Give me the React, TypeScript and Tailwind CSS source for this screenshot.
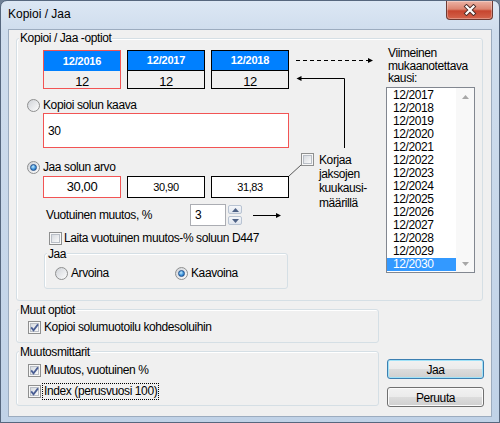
import React from 'react';

const Check = ({ checked = false }: { checked?: boolean }) => (
  <span className="relative inline-block size-[13px] shrink-0 border border-[#8e8f8f] bg-[#f7f7f7]">
    <span className="absolute inset-[1px] border border-[#b9bec6] bg-gradient-to-br from-[#d7dbe0] to-[#fafafa]" />
    {checked && (
      <svg className="absolute -left-px -top-px" width="13" height="13" viewBox="0 0 13 13">
        <path d="M3.2 6.4 L5.5 9.2 L10 3.4" fill="none" stroke="#4a5e94" strokeWidth="1.8" />
      </svg>
    )}
  </span>
);

const Radio = ({ checked = false }: { checked?: boolean }) => (
  <span className="inline-flex size-[13px] shrink-0 items-center justify-center rounded-full border border-[#8e8f8f] bg-gradient-to-br from-[#d0d3d8] to-[#fdfdfd]">
    {checked && (
      <span className="size-[7px] rounded-full border border-[#23518c] bg-[radial-gradient(circle_at_40%_35%,#c4ecff_0%,#3c92da_55%,#1b5ca6_100%)]" />
    )}
  </span>
);

const Group = ({
  label,
  className = '',
  labelClass = '-top-[7px]',
  children,
}: {
  label: string;
  className?: string;
  labelClass?: string;
  children?: React.ReactNode;
}) => (
  <div className={`relative rounded-[3px] border border-[#d5dfe5] shadow-[inset_1px_1px_0_#ffffff] ${className}`}>
    <span className={`absolute left-[2px] ${labelClass} bg-[#f0f0f0] px-px leading-[14px]`}>{label}</span>
    {children}
  </div>
);

const DateBox = ({ year, red = false }: { year: number; red?: boolean }) => (
  <div className={`flex h-[39px] w-[78px] flex-col border ${red ? 'border-[#f25454]' : 'border-black'}`}>
    <div
      className={`flex h-[21px] items-center justify-center bg-[#0080ff] text-[11px] font-bold tracking-[-0.2px] text-white ${
        red ? '' : 'border-b border-black'
      }`}
    >
      12/{year}
    </div>
    <div className="flex flex-1 items-center justify-center pt-[4px] text-[13px] leading-[13px]">12</div>
  </div>
);

const ValueBox = ({ value, red = false }: { value: string; red?: boolean }) => (
  <div
    className={`flex h-[22px] w-[78px] items-center justify-center border bg-white ${
      red ? 'border-[#f25454] text-[13px]' : 'border-black text-[11px]'
    }`}
  >
    {value}
  </div>
);

const Btn = ({ children, primary = false }: { children: React.ReactNode; primary?: boolean }) => (
  <div
    className={`flex h-[20px] w-[97px] items-center justify-center rounded-[3px] border bg-[linear-gradient(180deg,#f2f2f2_0%,#ebebeb_50%,#dddddd_50%,#cfcfcf_100%)] pt-px ${
      primary
        ? 'border-[#3c7fb1] shadow-[inset_0_0_0_1px_#9fe2f8]'
        : 'border-[#707070] shadow-[inset_0_0_0_1px_#fbfbfb]'
    }`}
  >
    {children}
  </div>
);

const years = Array.from({ length: 14 }, (_, i) => 2017 + i);

export default function App() {
  return (
    <div className="h-[423px] w-[500px] overflow-hidden bg-[#6f8096] font-['Liberation_Sans',Arial,sans-serif] text-[12px] tracking-[-0.4px] text-black">
      <div className="flex h-full flex-col rounded-t-[7px] border border-[#56677e] bg-[linear-gradient(180deg,#dce7f4_0px,#cfdded_30px,#c0d2e7_100%)]">
        {/* title bar */}
        <div className="flex h-[28px] shrink-0">
          <span className="ml-[7px] mt-[6px] leading-[15px] tracking-normal">Kopioi / Jaa</span>
          <div className="ml-auto mr-[6px] flex h-[19px] w-[47px] items-center justify-center rounded-b-[4px] border border-t-0 border-[#6e3a33] bg-[linear-gradient(180deg,#ecb3a5_0%,#dc8571_45%,#c7452f_55%,#d4644c_100%)] shadow-[inset_0_0_0_1px_rgba(255,255,255,0.3)]">
            <svg width="14" height="12" viewBox="0 0 14 12">
              <path d="M3.5 2.5 L10.5 9.5 M10.5 2.5 L3.5 9.5" stroke="#4b2c28" strokeWidth="4" strokeLinecap="square" />
              <path d="M3.5 2.5 L10.5 9.5 M10.5 2.5 L3.5 9.5" stroke="#ffffff" strokeWidth="2.2" strokeLinecap="square" />
            </svg>
          </div>
        </div>

        {/* client area */}
        <div className="mx-[7px] mb-[5px] flex-1 border border-[#9cacbf] bg-[#f0f0f0] pl-[7px] pt-[8px]">
          <Group label="Kopioi / Jaa -optiot" labelClass="-top-[8px]" className="h-[263px] w-[467px]">
            <svg className="pointer-events-none absolute left-0 top-0 overflow-visible" width="465" height="261">
              <line x1="279" y1="21.5" x2="352" y2="21.5" stroke="#000" strokeDasharray="4 3" />
              <polygon points="356,21.5 351,19 351,24" fill="#000" />
              <path d="M327.5 109 V39.5 H283" fill="none" stroke="#000" />
              <polygon points="279.5,39.5 284.5,37 284.5,42" fill="#000" />
              <line x1="284" y1="126" x2="272" y2="137" stroke="#5a5a5a" />
              <line x1="236" y1="176.5" x2="260" y2="176.5" stroke="#000" />
              <polygon points="264,176.5 259,174 259,179" fill="#000" />
            </svg>

            <div className="flex">
              {/* left column */}
              <div className="flex w-[272px] flex-col">
                <div className="ml-[26px] mt-[11px] flex gap-[6px]">
                  <DateBox year={2016} red />
                  <DateBox year={2017} />
                  <DateBox year={2018} />
                </div>

                <div className="ml-[10px] mt-[8px] flex h-[16px] items-center gap-[3px]">
                  <Radio />
                  <span>Kopioi solun kaava</span>
                </div>

                <div className="ml-[26px] flex h-[35px] w-[246px] items-center border border-[#f25454] bg-white pl-[4px]">
                  30
                </div>

                <div className="ml-[10px] mt-[11px] flex h-[16px] items-center gap-[3px]">
                  <Radio checked />
                  <span>Jaa solun arvo</span>
                </div>

                <div className="ml-[26px] mt-px flex gap-[6px]">
                  <ValueBox value="30,00" red />
                  <ValueBox value="30,90" />
                  <ValueBox value="31,83" />
                </div>

                <div className="ml-[29px] mt-[6px] flex h-[22px] items-center">
                  <span className="w-[144px]">Vuotuinen muutos, %</span>
                  <div className="flex h-[22px] w-[36px] items-center border border-[#abadb3] bg-white pl-[4px]">3</div>
                  <div className="ml-[2px] flex h-[22px] w-[14px] flex-col justify-between py-px">
                    <div className="flex h-[9px] items-center justify-center rounded-[2px] border border-[#b8c3d2] bg-gradient-to-b from-[#f5f7fa] to-[#dfe5ee]">
                      <svg width="7" height="4" viewBox="0 0 7 4">
                        <polygon points="3.5,0 7,4 0,4" fill="#4d6185" />
                      </svg>
                    </div>
                    <div className="flex h-[9px] items-center justify-center rounded-[2px] border border-[#b8c3d2] bg-gradient-to-b from-[#f5f7fa] to-[#dfe5ee]">
                      <svg width="7" height="4" viewBox="0 0 7 4">
                        <polygon points="0,0 7,0 3.5,4" fill="#4d6185" />
                      </svg>
                    </div>
                  </div>
                </div>

                <div className="ml-[32px] mt-[4px] flex h-[16px] items-center gap-[2px]">
                  <Check />
                  <span>Laita vuotuinen muutos-% soluun D447</span>
                </div>

                <Group label="Jaa" className="ml-[27px] mt-[7px] h-[36px] w-[244px]">
                  <div className="flex pl-[10px] pt-[11px]">
                    <div className="flex h-[16px] w-[120px] items-center gap-[3px]">
                      <Radio />
                      <span>Arvoina</span>
                    </div>
                    <div className="flex h-[16px] items-center gap-[3px]">
                      <Radio checked />
                      <span>Kaavoina</span>
                    </div>
                  </div>
                </Group>
              </div>

              {/* middle column */}
              <div className="flex w-[97px] items-start gap-[5px] pl-[12px] pt-[114px]">
                <Check />
                <span className="-mt-[0.5px] leading-[14.4px]">
                  Korjaa
                  <br />
                  jaksojen
                  <br />
                  kuukausi-
                  <br />
                  määrillä
                </span>
              </div>

              {/* list column */}
              <div className="flex flex-col pt-[8px]">
                <div className="ml-[2px] h-[40px] leading-[12.7px]">
                  Viimeinen
                  <br />
                  mukaanotettava
                  <br />
                  kausi:
                </div>
                <div className="flex h-[186px] w-[89px] border border-[#828790] bg-white">
                  <div className="w-[69px] pt-px">
                    {years.map((y) => (
                      <div
                        key={y}
                        className={`h-[13px] pl-[6px] leading-[13px] ${y === 2030 ? 'bg-[#3399ff] text-white' : ''}`}
                      >
                        12/{y}
                      </div>
                    ))}
                  </div>
                  <div className="flex w-[18px] flex-col justify-between bg-[#f8f8f8]">
                    <div className="flex h-[17px] items-center justify-center">
                      <svg width="7" height="4" viewBox="0 0 7 4">
                        <polygon points="3.5,0 7,4 0,4" fill="#a7a7a7" />
                      </svg>
                    </div>
                    <div className="flex h-[17px] items-center justify-center">
                      <svg width="7" height="4" viewBox="0 0 7 4">
                        <polygon points="0,0 7,0 3.5,4" fill="#a7a7a7" />
                      </svg>
                    </div>
                  </div>
                </div>
              </div>
            </div>
          </Group>

          {/* lower section */}
          <div className="mt-[8px] flex">
            <div className="flex w-[363px] flex-col">
              <Group label="Muut optiot" className="h-[34px]">
                <div className="flex h-[16px] items-center gap-[3px] pl-[11px] mt-[9px]">
                  <Check checked />
                  <span>Kopioi solumuotoilu kohdesoluihin</span>
                </div>
              </Group>
              <Group label="Muutosmittarit" className="mt-[8px] h-[55px]">
                <div className="flex flex-col gap-[5px] pl-[11px] pt-[10px]">
                  <div className="flex h-[16px] items-center gap-[2px]">
                    <Check checked />
                    <span className="px-px">Muutos, vuotuinen %</span>
                  </div>
                  <div className="flex h-[16px] items-center gap-[2px]">
                    <Check checked />
                    <span className="outline-1 outline-dotted outline-black px-px leading-[15px]">
                      Index (perusvuosi 100)
                    </span>
                  </div>
                </div>
              </Group>
            </div>
            <div className="ml-[8px] flex flex-col gap-[8px] pt-[50px]">
              <Btn primary>Jaa</Btn>
              <Btn>Peruuta</Btn>
            </div>
          </div>
        </div>
      </div>
    </div>
  );
}
